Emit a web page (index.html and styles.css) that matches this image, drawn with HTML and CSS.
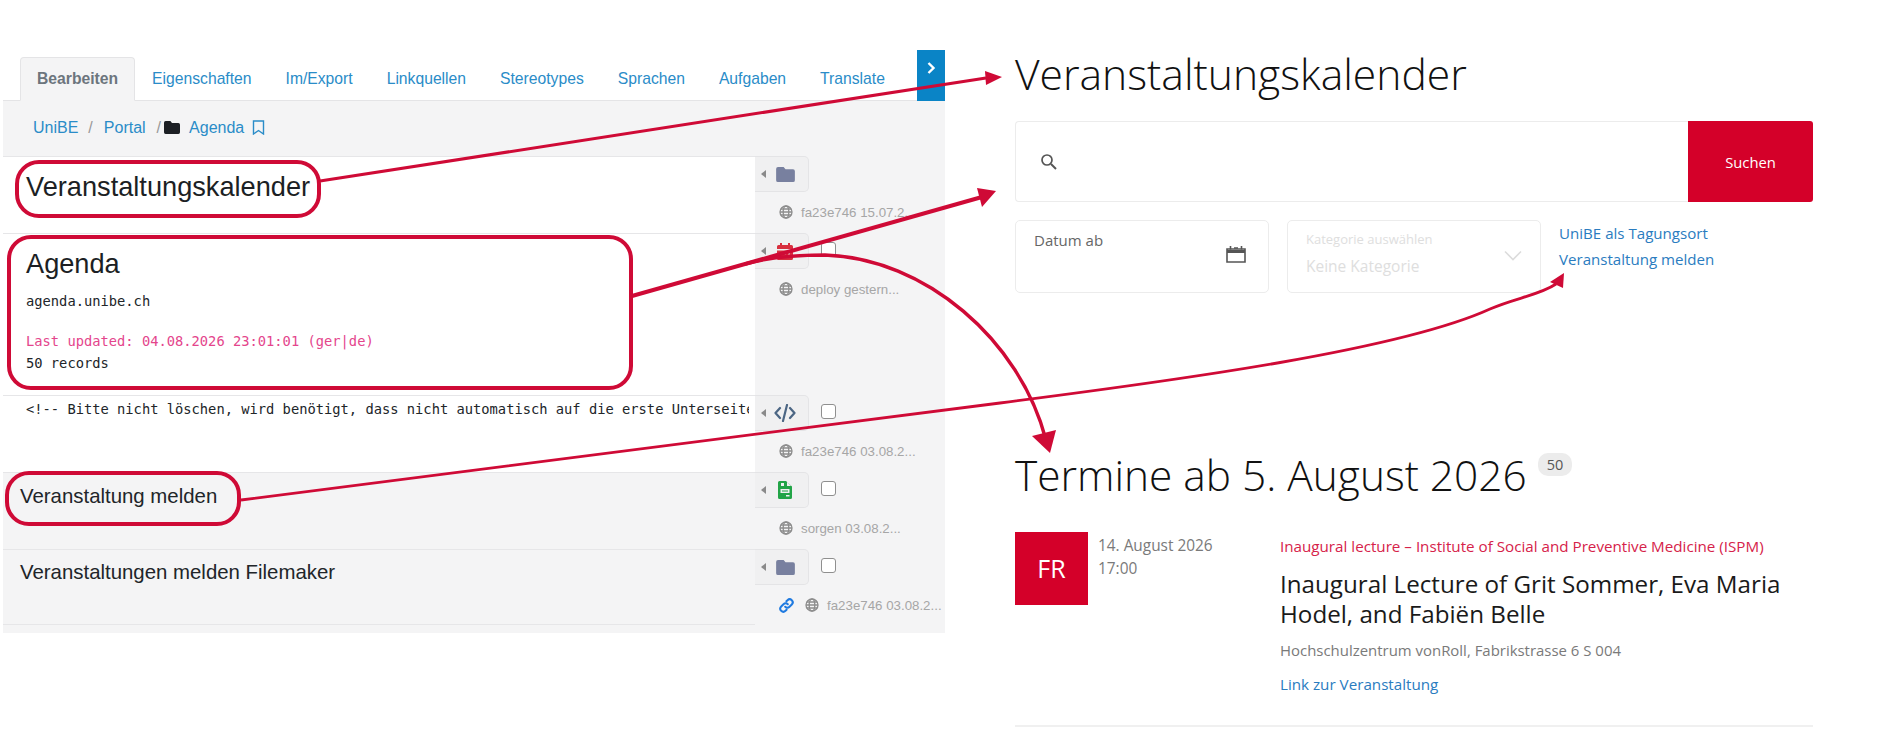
FILE: index.html
```html
<!DOCTYPE html>
<html lang="de">
<head>
    <meta charset="UTF-8">
    <title>Veranstaltungskalender</title>
    <link rel="stylesheet" href="styles.css">
</head>
<body>
    <svg class="defs" width="0" height="0">
        <symbol id="i-folder" viewBox="0 0 20 16"><path d="M2 0h6l2 2.500h8a2 2 0 0 1 2 2V14a2 2 0 0 1-2 2H2a2 2 0 0 1-2-2V2a2 2 0 0 1 2-2z"/></symbol>
        <symbol id="i-cal" viewBox="0 0 16 17"><path d="M3 0h2v2h6V0h2v2h1.500A1.500 1.500 0 0 1 16 3.500V6H0V3.500A1.500 1.500 0 0 1 1.500 2H3zM0 7.500h16v8a1.500 1.500 0 0 1-1.500 1.500h-13A1.500 1.500 0 0 1 0 15.500zM3 9.500v2h2v-2zM7 9.500v2h2v-2zM11 9.500v2h2v-2zM3 13v2h2v-2zM7 13v2h2v-2zM11 13v2h2v-2z" fill-rule="evenodd"/></symbol>
        <symbol id="i-code" viewBox="0 0 22 18"><path d="M6 4 1.500 9 6 14M16 4l4.500 5L16 14M13 1 9 17" fill="none" stroke="currentColor" stroke-width="2.200" stroke-linecap="round" stroke-linejoin="round"/></symbol>
        <symbol id="i-file" viewBox="0 0 14 18"><path fill-rule="evenodd" d="M1.500 0H8l6 5.500v11a1.500 1.500 0 0 1-1.500 1.500h-11A1.500 1.500 0 0 1 0 16.500v-15A1.500 1.500 0 0 1 1.500 0zM9 1v4h4zM3 2v3h3V2zM2.500 8v4h9V8zM4 9.500h6v1H4zM8 14v1.500h3.500V14z"/></symbol>
        <symbol id="i-globe" viewBox="0 0 14 14"><g fill="none" stroke="currentColor" stroke-width="1.300"><circle cx="7" cy="7" r="6"/><ellipse cx="7" cy="7" rx="2.800" ry="6"/><path d="M1 7h12M1.800 4h10.400M1.800 10h10.400"/></g></symbol>
        <symbol id="i-link" viewBox="0 0 15 15"><path d="M6.200 8.800a3 3 0 0 0 4.300 0l2.300-2.300a3 3 0 0 0-4.300-4.300L7.400 3.300M8.800 6.200a3 3 0 0 0-4.300 0L2.200 8.500a3 3 0 0 0 4.300 4.300l1.100-1.100" fill="none" stroke="currentColor" stroke-width="2" stroke-linecap="round"/></symbol>
    </svg>

    <section class="editor">
        <div class="tabbar">
            <nav class="tabs">
                <a class="tab tab-active">Bearbeiten</a>
                <a class="tab">Eigenschaften</a>
                <a class="tab">Im/Export</a>
                <a class="tab">Linkquellen</a>
                <a class="tab">Stereotypes</a>
                <a class="tab">Sprachen</a>
                <a class="tab">Aufgaben</a>
                <a class="tab">Translate</a>
            </nav>
            <a class="tab-next">
                <svg width="10" height="14" viewBox="0 0 10 14"><path d="M2.500 2 7.500 7l-5 5" fill="none" stroke="#fff" stroke-width="2.400"/></svg>
            </a>
        </div>
        <div class="crumbs">
            <a>UniBE</a><span class="sep sep-first">/</span>
            <a>Portal</a><span class="sep sep-second">/</span>
            <svg class="crumb-folder" width="16" height="13"><use href="#i-folder"/></svg>
            <a>Agenda</a>
            <svg class="crumb-mark" width="13" height="15" viewBox="0 0 13 15"><path d="M1.500 1h10v13l-5-3.500-5 3.500z" fill="none" stroke="#2a8cc8" stroke-width="1.400"/></svg>
        </div>

        <div class="row row-1">
            <div class="row-main"><h3 class="row-title-lg">Veranstaltungskalender</h3></div>
            <div class="row-side">
                <div class="side-top">
                    <div class="handle"><span class="caret"></span><svg class="ico c-folder" width="19" height="15"><use href="#i-folder"/></svg></div>
                </div>
                <div class="meta"><svg class="globe" width="14" height="14"><use href="#i-globe"/></svg>fa23e746 15.07.2...</div>
            </div>
        </div>
        <div class="row row-2">
            <div class="row-main">
                <h3 class="row-title-lg">Agenda</h3>
                <p class="mono mono-host">agenda.unibe.ch</p>
                <p class="mono mono-pink">Last updated: 04.08.2026 23:01:01 (ger|de)</p>
                <p class="mono">50 records</p>
            </div>
            <div class="row-side">
                <div class="side-top">
                    <div class="handle"><span class="caret"></span><svg class="ico c-red" width="16" height="17"><use href="#i-cal"/></svg></div>
                    <span class="check"></span>
                </div>
                <div class="meta"><svg class="globe" width="14" height="14"><use href="#i-globe"/></svg>deploy gestern...</div>
            </div>
        </div>
        <div class="row row-3">
            <div class="row-main"><p class="mono mono-cut">&lt;!-- Bitte nicht löschen, wird benötigt, dass nicht automatisch auf die erste Unterseite weitergeleitet wird --&gt;</p></div>
            <div class="row-side">
                <div class="side-top">
                    <div class="handle"><span class="caret"></span><svg class="ico c-code" width="22" height="18"><use href="#i-code"/></svg></div>
                    <span class="check"></span>
                </div>
                <div class="meta"><svg class="globe" width="14" height="14"><use href="#i-globe"/></svg>fa23e746 03.08.2...</div>
            </div>
        </div>
        <div class="row row-grey">
            <div class="row-main"><h4 class="row-title">Veranstaltung melden</h4></div>
            <div class="row-side">
                <div class="side-top">
                    <div class="handle"><span class="caret"></span><svg class="ico c-green" width="14" height="18"><use href="#i-file"/></svg></div>
                    <span class="check"></span>
                </div>
                <div class="meta"><svg class="globe" width="14" height="14"><use href="#i-globe"/></svg>sorgen 03.08.2...</div>
            </div>
        </div>
        <div class="row row-grey row-last">
            <div class="row-main"><h4 class="row-title">Veranstaltungen melden Filemaker</h4></div>
            <div class="row-side">
                <div class="side-top">
                    <div class="handle"><span class="caret"></span><svg class="ico c-folder" width="19" height="15"><use href="#i-folder"/></svg></div>
                    <span class="check"></span>
                </div>
                <div class="meta"><svg class="link" width="15" height="15"><use href="#i-link"/></svg><svg class="globe" width="14" height="14"><use href="#i-globe"/></svg>fa23e746 03.08.2...</div>
            </div>
        </div>
    </section>

    <main class="calendar">
        <h1 class="cal-title">Veranstaltungskalender</h1>
        <div class="search">
            <div class="search-field">
                <svg width="18" height="18" viewBox="0 0 18 18"><circle cx="7" cy="7" r="5" fill="none" stroke="#555" stroke-width="1.700"/><path d="M11 11l5 5" stroke="#555" stroke-width="1.900"/></svg>
            </div>
            <button class="search-btn">Suchen</button>
        </div>
        <div class="filters">
            <div class="field field-date">
                <span class="field-label">Datum ab</span>
                <svg width="20" height="18" viewBox="0 0 20 18"><path d="M1 4h18v13H1z" fill="none" stroke="#555" stroke-width="1.600"/><path d="M1 6.500h18" stroke="#555" stroke-width="3"/><path d="M4.500 1v3.500M15.500 1v3.500M8 3h4" stroke="#555" stroke-width="1.600"/></svg>
            </div>
            <div class="field field-cat">
                <div>
                    <span class="cat-label">Kategorie auswählen</span>
                    <span class="cat-value">Keine Kategorie</span>
                </div>
                <svg width="18" height="11" viewBox="0 0 18 11"><path d="M1 1.500l8 8 8-8" fill="none" stroke="#dcdcdc" stroke-width="1.600"/></svg>
            </div>
            <div class="filter-links">
                <a>UniBE als Tagungsort</a>
                <a>Veranstaltung melden</a>
            </div>
        </div>

        <div class="list-head">
            <h2 class="list-title">Termine ab 5. August 2026</h2>
            <span class="count">50</span>
        </div>

        <article class="event">
            <div class="day">FR</div>
            <div class="when">14. August 2026<br>17:00</div>
            <div class="event-body">
                <div class="event-cat">Inaugural lecture – Institute of Social and Preventive Medicine (ISPM)</div>
                <h3 class="event-title">Inaugural Lecture of Grit Sommer, Eva Maria Hodel, and Fabiën Belle</h3>
                <div class="event-place">Hochschulzentrum vonRoll, Fabrikstrasse 6 S 004</div>
                <a class="event-link">Link zur Veranstaltung</a>
            </div>
        </article>
    </main>

    <!-- callouts and arrows on top of both screenshots -->
    <svg class="overlay" width="1890" height="731" viewBox="0 0 1890 731">
        <g fill="none" stroke="#cf0a36">
            <rect x="17" y="162" width="302" height="54" rx="22" stroke-width="4"/>
            <rect x="9" y="237" width="622" height="151" rx="22" stroke-width="4"/>
            <rect x="7" y="473" width="232" height="51" rx="22" stroke-width="4"/>
            <path d="M320 181 L986 78" stroke-width="3"/>
            <path d="M632 296 L982 197" stroke-width="4"/>
            <path d="M745 264 C770 257 800 255 825 255 C925 258 1020 340 1046 440" stroke-width="3.500"/>
            <path d="M241 500 L1000 403 C1180 380 1400 350 1490 309 C1515 298 1540 295 1556 284" stroke-width="2.800"/>
        </g>
        <g fill="#cf0a36">
            <polygon points="1002,77 985,71 986,85"/>
            <polygon points="996,191 977,188 982,207"/>
            <polygon points="1050,453 1032,436 1056,430"/>
            <polygon points="1564,273 1550,282 1563,288"/>
        </g>
    </svg>
</body>
</html>
```

FILE: styles.css
```css
* {
    box-sizing: border-box;
}
body {
    margin: 0;
    width: 1890px;
    height: 731px;
    overflow: hidden;
    display: flex;
    align-items: flex-start;
    padding-left: 3px;
    background: white;
    font-family: "Liberation Sans", Arial, sans-serif;
    color: #212529;
}
h1, h2, h3, h4, p {
    margin: 0;
    font-weight: 400;
}
.defs {
    position: absolute;
}
.overlay {
    position: absolute;
    left: 0;
    top: 0;
    pointer-events: none;
}

/* left screenshot */
.editor {
    width: 942px;
    margin-top: 49px;
    height: 584px;
    background: #f4f4f5;
}
.tabbar {
    display: flex;
    justify-content: space-between;
    align-items: flex-end;
    height: 52px;
    background: white;
    border-bottom: 1px solid #e4e4e6;
}
.tabs {
    display: flex;
    padding-left: 17px;
}
.tab {
    height: 43px;
    padding: 12px 16px 0;
    border: 1px solid transparent;
    font-size: 15.700px;
    color: #2a8cc8;
}
.tab-active {
    margin-bottom: -1px;
    height: 44px;
    background: #f4f4f5;
    border-color: #e4e4e6;
    border-bottom-color: #f4f4f5;
    border-radius: 4px 4px 0 0;
    font-weight: 700;
    color: #6c757d;
}
.tab-next {
    width: 28px;
    height: 51px;
    margin-bottom: -1px;
    padding-top: 11px;
    text-align: center;
    background: #0a84c6;
}
.crumbs {
    display: flex;
    align-items: center;
    height: 54px;
    padding-bottom: 1px;
    margin-bottom: 1px;
    padding-left: 30px;
    font-size: 16px;
    color: #2a8cc8;
}
.sep {
    color: #999;
}
.sep-first {
    margin: 0 11px 0 10px;
}
.sep-second {
    margin: 0 3px 0 11px;
}
.crumb-folder {
    fill: #1c1f24;
    margin-right: 9px;
}
.crumb-mark {
    margin-left: 8px;
}
.row {
    display: flex;
    height: 77px;
}
.row-2 {
    height: 162px;
}
.row-main {
    width: 752px;
    padding: 0 6px 0 23px;
    background: white;
    border-top: 1px solid #e6e6e8;
}
.row-grey .row-main {
    background: #f4f4f5;
    padding-left: 17px;
}
.row-last {
    height: 76px;
}
.row-last .row-main {
    border-bottom: 1px solid #e6e6e8;
}
.row-side {
    width: 190px;
}
.side-top {
    display: flex;
    align-items: center;
    gap: 11px;
}
.handle {
    display: flex;
    align-items: center;
    width: 54px;
    height: 36px;
    padding-left: 6px;
    background: #f0f0f1;
    border: 1px solid #e4e4e6;
    border-left: 0;
    border-radius: 0 5px 5px 0;
}
.caret {
    border: 4px solid transparent;
    border-left: 0;
    border-right: 5px solid #8a8a8a;
}
.ico {
    margin-left: 10px;
}
.c-folder {
    fill: #78809f;
}
.c-red {
    fill: #d8303f;
    margin-left: 11px;
}
.c-code {
    color: #4c6684;
    margin-left: 8px;
}
.c-green {
    fill: #22a447;
    margin-left: 12px;
}
.check {
    width: 15px;
    height: 15px;
    margin-top: -3px;
    margin-left: 1px;
    background: white;
    border: 1.500px solid #8f8f8f;
    border-radius: 3px;
}
.meta {
    display: flex;
    align-items: center;
    gap: 8px;
    height: 40px;
    padding-left: 24px;
    font-size: 13.300px;
    color: #a6a6a6;
}
.globe {
    color: #8d8d8d;
}
.link {
    color: #1f7ae0;
    margin-right: 3px;
}
.row-title-lg {
    padding-top: 15px;
    font-size: 27.200px;
    line-height: 30px;
    color: #1c1f24;
}
.row-title {
    padding-top: 11px;
    font-size: 20.400px;
    line-height: 24px;
}
.row-last .row-title {
    padding-top: 10px;
}
.mono {
    font-family: "DejaVu Sans Mono", monospace;
    font-size: 13.750px;
    line-height: 22px;
}
.mono-host {
    margin: 11px 0 18px;
}
.mono-pink {
    color: #e4458c;
}
.mono-cut {
    margin-top: 2px;
    white-space: nowrap;
    overflow: hidden;
}

/* right screenshot */
.calendar {
    width: 798px;
    margin-left: 70px;
    padding-top: 46px;
    font-family: "Open Sans", sans-serif;
}
.cal-title {
    font-size: 42.600px;
    font-weight: 300;
    line-height: 54px;
    color: #111;
}
.search {
    display: flex;
    height: 81px;
    margin-top: 21px;
}
.search-field {
    flex: 1;
    display: flex;
    align-items: center;
    padding-left: 24px;
    border: 1px solid #ececec;
    border-right: 0;
    border-radius: 4px 0 0 4px;
}
.search-btn {
    width: 125px;
    border: 0;
    border-radius: 0 3px 3px 0;
    background: #d40029;
    color: white;
    font-family: "Open Sans", sans-serif;
    font-size: 14.800px;
}
.filters {
    display: flex;
    gap: 18px;
    margin-top: 18px;
}
.field {
    display: flex;
    justify-content: space-between;
    width: 254px;
    height: 73px;
    padding: 9px 18px 0 18px;
    border: 1px solid #ececec;
    border-radius: 5px;
}
.field-date svg {
    margin-top: 15px;
    margin-right: 4px;
}
.field-label {
    font-size: 15px;
    color: #666;
}
.field-cat svg {
    margin-top: 20px;
}
.cat-label {
    display: block;
    font-size: 13px;
    color: #dedede;
}
.cat-value {
    display: block;
    margin-top: 7px;
    font-size: 15.500px;
    color: #dedede;
}
.filter-links {
    display: flex;
    flex-direction: column;
    gap: 6px;
    font-size: 15.100px;
    line-height: 20px;
    padding-top: 3px;
    color: #2a7cbf;
}
.list-head {
    display: flex;
    align-items: flex-start;
    gap: 11px;
    margin-top: 155px;
}
.list-title {
    font-size: 42.400px;
    font-weight: 300;
    line-height: 54px;
    color: #111;
}
.count {
    margin-top: 5px;
    padding: 0 9px;
    height: 23px;
    line-height: 23px;
    border-radius: 10px;
    background: #ececec;
    font-size: 14.500px;
    color: #555;
}
.event {
    display: flex;
    margin-top: 30px;
    padding-bottom: 31px;
    border-bottom: 2px solid #f0f0f0;
}
.day {
    width: 73px;
    height: 73px;
    line-height: 73px;
    text-align: center;
    background: #d40029;
    color: white;
    font-size: 25px;
}
.when {
    width: 182px;
    margin-left: 10px;
    margin-top: 2px;
    font-size: 15.400px;
    line-height: 23px;
    color: #7a7a7a;
}
.event-body {
    flex: 1;
    margin-top: 4px;
}
.event-cat {
    font-size: 15.200px;
    line-height: 20px;
    color: #d6224a;
}
.event-title {
    margin-top: 13px;
    font-size: 24.200px;
    line-height: 30px;
    color: #1a1a1a;
}
.event-place {
    margin-top: 11px;
    font-size: 14.950px;
    line-height: 20px;
    color: #7a7a7a;
}
.event-link {
    display: block;
    margin-top: 14px;
    font-size: 15.200px;
    line-height: 20px;
    color: #2a7cbf;
}
```
